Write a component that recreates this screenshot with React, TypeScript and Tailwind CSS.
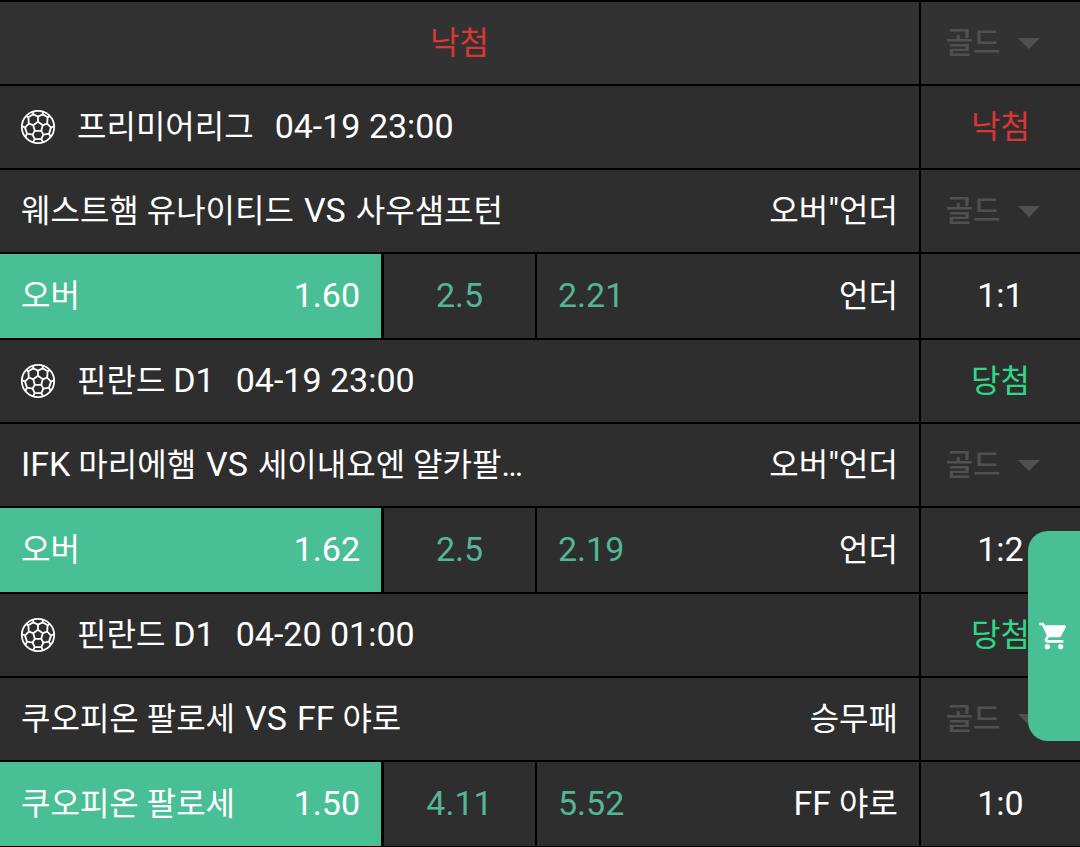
import React, { useState } from 'react';

type Result = 'win' | 'lose';

type Bet = {
  id: number;
  league: string;
  time: string;
  result: Result;
  home: string;
  away: string;
  market: string;
  homePick: string;
  homeOdds: string;
  line: string;
  awayOdds: string;
  awayPick: string;
  score: string;
};

const bets: Bet[] = [
  {
    id: 1,
    league: '프리미어리그',
    time: '04-19 23:00',
    result: 'lose',
    home: '웨스트햄 유나이티드',
    away: '사우샘프턴',
    market: '오버"언더',
    homePick: '오버',
    homeOdds: '1.60',
    line: '2.5',
    awayOdds: '2.21',
    awayPick: '언더',
    score: '1:1',
  },
  {
    id: 2,
    league: '핀란드 D1',
    time: '04-19 23:00',
    result: 'win',
    home: 'IFK 마리에햄',
    away: '세이내요엔 얄카팔…',
    market: '오버"언더',
    homePick: '오버',
    homeOdds: '1.62',
    line: '2.5',
    awayOdds: '2.19',
    awayPick: '언더',
    score: '1:2',
  },
  {
    id: 3,
    league: '핀란드 D1',
    time: '04-20 01:00',
    result: 'win',
    home: '쿠오피온 팔로세',
    away: 'FF 야로',
    market: '승무패',
    homePick: '쿠오피온 팔로세',
    homeOdds: '1.50',
    line: '4.11',
    awayOdds: '5.52',
    awayPick: 'FF 야로',
    score: '1:0',
  },
];

// latin letters and digits are set a little larger than the hangul
function Name({ text }: { text: string }) {
  return (
    <span>
      {text.split(/([A-Z0-9"]+)/).map((part, i) =>
        i % 2 ? (
          <span key={i} className="text-[34px] leading-none">
            {part}
          </span>
        ) : (
          part
        ),
      )}
    </span>
  );
}

function Num({ children }: { children: string }) {
  return <span className="block pb-0.5 text-[34px]">{children}</span>;
}

function BallIcon() {
  return (
    <svg
      viewBox="0 0 36 36"
      className="size-9 shrink-0"
      fill="none"
      stroke="currentColor"
      strokeWidth="1.8"
      strokeLinejoin="round"
      aria-hidden="true"
    >
      <circle cx="18" cy="18" r="16.2" strokeWidth="1.8" />
      <path d="M18 12.8 22.8 16.2 21.2 21.8H14.8L13.2 16.2Z" />
      <path d="M18 12.8V7.6M22.8 16.2 27.2 14.7M21.2 21.8 23.4 25.6M14.8 21.8 12.6 25.6M13.2 16.2 8.8 14.7" />
      <path d="M18 7.6 22.8 5.2 27.6 8.3 27.2 14.7 31 18.6 29 24.6 23.4 25.6 21.3 30.2H14.7L12.6 25.6 7 24.6 5 18.6 8.8 14.7 8.4 8.3 13.2 5.2Z" />
      <path d="M13.2 5.2 13.4 2.4M22.8 5.2 22.6 2.4M27.6 8.3 30 7M31 18.6 34.2 17M29 24.6 30.6 28M21.3 30.2 23 33.4M14.7 30.2 13 33.4M7 24.6 5.4 28M5 18.6 1.8 17M8.4 8.3 6 7" />
    </svg>
  );
}

function CartIcon() {
  return (
    <svg viewBox="0 0 24 24" className="size-8" fill="currentColor" aria-hidden="true">
      <path d="M7 18c-1.1 0-1.99.9-1.99 2S5.9 22 7 22s2-.9 2-2-.9-2-2-2zM1 2v2h2l3.6 7.59-1.35 2.45c-.16.28-.25.61-.25.96 0 1.1.9 2 2 2h12v-2H7.42c-.14 0-.25-.11-.25-.25l.03-.12.9-1.63h7.45c.75 0 1.41-.41 1.75-1.03l3.58-6.49A1.003 1.003 0 0 0 20 4H5.21l-.94-2H1zm16 16c-1.1 0-1.99.9-1.99 2s.89 2 1.99 2 2-.9 2-2-.9-2-2-2z" />
    </svg>
  );
}

function ResultText({ result }: { result: Result }) {
  return (
    <span className={result === 'win' ? 'text-[#2fd886]' : 'text-[#d93634]'}>
      {result === 'win' ? '당첨' : '낙첨'}
    </span>
  );
}

function GoldSelect({ label }: { label: string }) {
  return (
    <div className="flex items-center gap-4 pr-4 text-[#505050]">
      <select
        aria-label={label}
        disabled
        className="appearance-none bg-transparent text-[30px] leading-10 font-medium opacity-100"
      >
        <option>골드</option>
      </select>
      <svg viewBox="0 0 22 11" className="w-[22px]" aria-hidden="true">
        <path d="M0 0H22L11 11Z" fill="currentColor" />
      </svg>
    </div>
  );
}

function Row({
  children,
  side,
  className = 'bg-[#2e2e2e]',
}: {
  children: React.ReactNode;
  side: React.ReactNode;
  className?: string;
}) {
  return (
    <div className={`flex border-b-2 border-black ${className}`}>
      <div className="flex-1 min-w-0 flex">{children}</div>
      <div className="w-[161px] shrink-0 flex items-center justify-center border-l-2 border-black">
        {side}
      </div>
    </div>
  );
}

function BetRows({ bet }: { bet: Bet }) {
  const [picked, setPicked] = useState<'home' | 'line' | 'away'>('home');
  const on = 'bg-[#49bf95] text-white';

  return (
    <section>
      <Row side={<ResultText result={bet.result} />}>
        <div className="flex items-center gap-[21px] h-[82px] px-5">
          <BallIcon />
          <Name text={bet.league} />
          <Num>{bet.time}</Num>
        </div>
      </Row>
      <Row side={<GoldSelect label={`${bet.league} ${bet.home}`} />}>
        <div className="flex-1 flex items-center justify-between h-[82px] px-[21px]">
          <div className="flex items-center gap-2.5">
            <Name text={bet.home} />
            <Name text="VS" />
            <Name text={bet.away} />
          </div>
          <Name text={bet.market} />
        </div>
      </Row>
      <Row side={<Num>{bet.score}</Num>}>
        <div className="flex-1 grid grid-cols-[381fr_154fr_384fr] h-[84px]">
          <button
            onClick={() => setPicked('home')}
            className={`flex items-center justify-between px-[21px] ${picked === 'home' ? on : ''}`}
          >
            <Name text={bet.homePick} />
            <Num>{bet.homeOdds}</Num>
          </button>
          <button
            onClick={() => setPicked('line')}
            className={`border-l-3 border-black ${picked === 'line' ? on : 'text-[#52b794]'}`}
          >
            <Num>{bet.line}</Num>
          </button>
          <button
            onClick={() => setPicked('away')}
            className={`flex items-center justify-between border-l-2 border-black px-[21px] ${picked === 'away' ? on : ''}`}
          >
            <span className={picked === 'away' ? 'text-white' : 'text-[#52b794]'}>
              <Num>{bet.awayOdds}</Num>
            </span>
            <Name text={bet.awayPick} />
          </button>
        </div>
      </Row>
    </section>
  );
}

export default function App() {
  return (
    <main className="border-t-2 border-black bg-[#2e2e2e] text-white text-[32px] leading-10 whitespace-nowrap font-[Roboto,'Noto_Sans_CJK_KR',sans-serif]">
      <Row className="bg-[#323232]" side={<GoldSelect label="전체" />}>
        <div className="flex-1 flex items-center justify-center h-[82px]">
          <ResultText result="lose" />
        </div>
      </Row>
      {bets.map((bet) => (
        <BetRows key={bet.id} bet={bet} />
      ))}
      <button
        aria-label="장바구니"
        className="fixed right-0 top-[531px] w-[52px] h-[210px] flex items-center justify-center rounded-l-[20px] bg-[#49bf95]"
      >
        <CartIcon />
      </button>
    </main>
  );
}
